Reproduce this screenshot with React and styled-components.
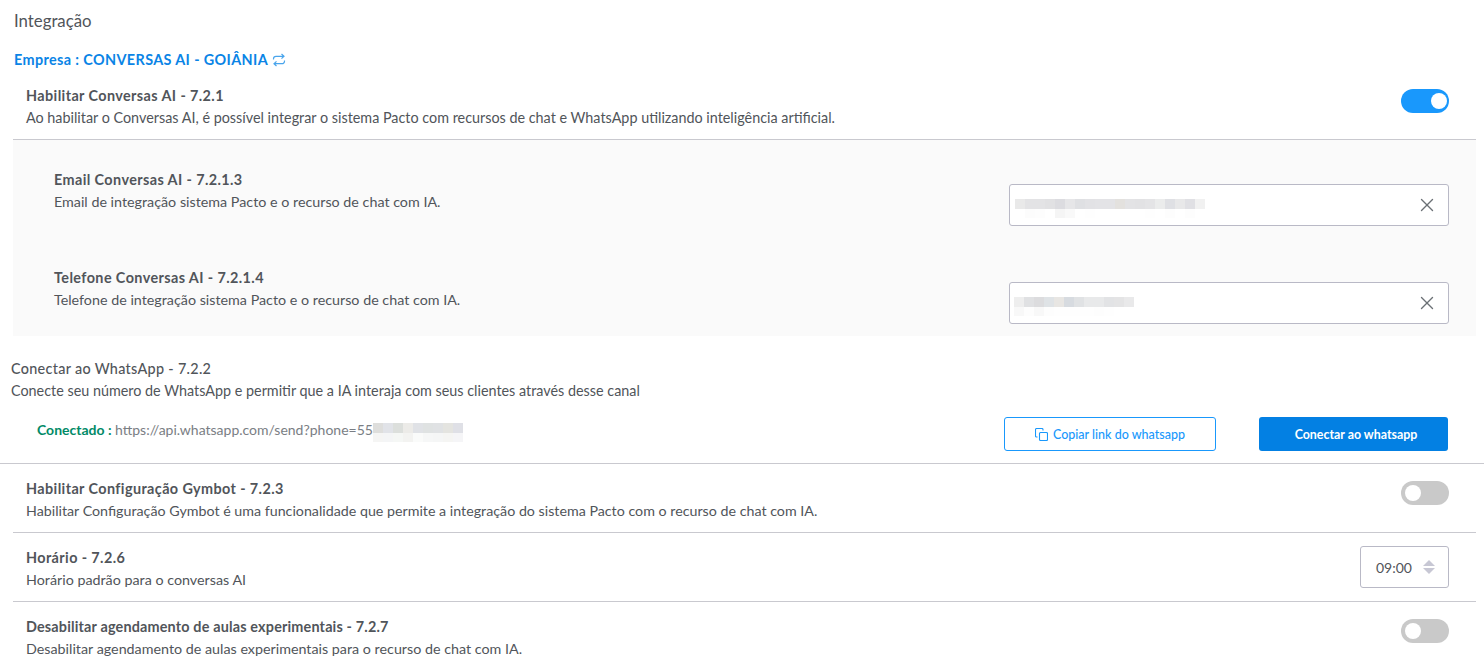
import React from "react"
import styled, { createGlobalStyle } from "styled-components"
import { X } from "lucide-react"

const GlobalStyle = createGlobalStyle`
  html, body {
    margin: 0;
    padding: 0;
    background: #fff;
    font-family: "Lato", "Liberation Sans", sans-serif;
    color: #51555a;
  }
`

const Page = styled.div`
  width: 1484px;
  height: 666px;
  overflow: hidden;
`

const Heading = styled.div`
  height: 42px;
  padding: 12px 0 0 14px;
  box-sizing: border-box;
  font-size: 16.8px;
  line-height: 18px;
`

const Company = styled.div`
  display: flex;
  align-items: center;
  gap: 4px;
  height: 35px;
  padding-left: 14px;
  color: #0a84e6;
  font-size: 14.4px;
  font-weight: 700;
  letter-spacing: 0.38px;
`

const Row = styled.div`
  display: flex;
  justify-content: space-between;
  align-items: flex-start;
  height: ${(p) => p.$height}px;
  margin: 0 8px 0 13px;
  padding: ${(p) => p.$top}px 27px 0 13px;
  box-sizing: border-box;
  border-bottom: ${(p) => (p.$last ? "none" : "1px solid #c9c9cf")};
`

const Title = styled.div`
  font-size: 14.4px;
  line-height: 22px;
  font-weight: 700;
  letter-spacing: ${(p) => p.$spacing || 0.4}px;
`

const Desc = styled.div`
  font-size: ${(p) => p.$size || 14.3}px;
  line-height: 22px;
`

const Switch = styled.div`
  display: flex;
  justify-content: ${(p) => (p.$on ? "flex-end" : "flex-start")};
  align-items: center;
  width: 48px;
  height: 24px;
  padding: ${(p) => (p.$on ? "0 2px" : "0 4px")};
  box-sizing: border-box;
  border-radius: 12px;
  background: ${(p) => (p.$on ? "#1998fc" : "#c9c9c9")};
  margin-top: ${(p) => (p.$on ? 4 : 3)}px;
  &::after {
    content: "";
    width: 16px;
    height: 16px;
    border-radius: 50%;
    background: #fff;
  }
`

const Panel = styled.div`
  margin: 0 8px 0 13px;
  height: 196px;
  background: #fafafa;
`

const PanelRow = styled.div`
  display: flex;
  justify-content: space-between;
  align-items: flex-start;
  height: 98px;
  padding: 29px 27px 0 41px;
  box-sizing: border-box;
`

const Field = styled.div`
  display: flex;
  align-items: center;
  justify-content: space-between;
  width: 440px;
  height: 42px;
  margin-top: 15px;
  padding: 0 10px 0 ${(p) => p.$left}px;
  box-sizing: border-box;
  background: #fff;
  border: 1px solid #b9b9c6;
  border-radius: 3px;
  color: #6b7075;
`

const Pixels = styled.svg`
  display: block;
  flex: none;
  margin-top: ${(p) => p.$top}px;
`

const Connect = styled.div`
  height: 128px;
  padding: 22px 0 0 11px;
  box-sizing: border-box;
  border-bottom: 1px solid #c9c9cf;
`

const ConnectTitle = styled.div`
  font-size: 14.4px;
  line-height: 22px;
  font-weight: 500;
  letter-spacing: 0.3px;
`

const ConnectRow = styled.div`
  display: flex;
  align-items: center;
  margin-top: 15px;
  height: 34px;
`

const Status = styled.div`
  display: flex;
  align-items: center;
  width: 993px;
  height: 34px;
  padding: 0 0 10px 26px;
  box-sizing: border-box;
  font-size: 14px;
  color: #7a7e84;
`

const Connected = styled.span`
  color: #028a67;
  font-weight: 700;
  white-space: pre;
`

const OutlineButton = styled.div`
  display: flex;
  align-items: center;
  justify-content: center;
  gap: 5px;
  width: 212px;
  height: 34px;
  box-sizing: border-box;
  border: 1px solid #1998fc;
  border-radius: 3px;
  color: #1998fc;
  font-size: 12.5px;
  font-weight: 500;
`

const SolidButton = styled.div`
  display: flex;
  align-items: center;
  justify-content: center;
  width: 189px;
  height: 34px;
  margin-left: 43px;
  padding-left: 5px;
  box-sizing: border-box;
  border-radius: 3px;
  background: #0380e3;
  color: #fff;
  font-size: 12.4px;
  font-weight: 700;
`

const TimeBox = styled.div`
  display: flex;
  align-items: center;
  gap: 11px;
  width: 89px;
  height: 42px;
  margin-top: -1px;
  padding-left: 15px;
  box-sizing: border-box;
  border: 1px solid #b9b9c6;
  border-radius: 3px;
  font-size: 14px;
`

const emailCells = [
  "#e9e9e9 #e3e3e5 #e3e3e5 #e1e1e3 #dcdce0 #e6e6e8 #dfe0e3 #e2e2e5 #e3e3e6 #e3e3e6 #e3e1de #e3e3e5 #e2e2e4 #e4e4e6 #ebecec #dfe0e4 #e8e8e9 #e0e0e4 #f1f1f1",
  "#fff #fcfcfc #fdfdfd #fff #f5f5f5 #f9f9f9 #fff #fefefe #fff #fff #fff #fff #fff #fefefe #fff #fdfdfd #fff #fdfdfd #fff",
]
const phoneCells = [
  "#eeeeee #e0e1e3 #dcdcde #dfe3e6 #e8e6e3 #d7dbe0 #e0e2e4 #e8e9ea #e8e9ea #e2e3e5 #e4e4e5 #e9e9ea",
  "#f8f8f8 #fdfdfd #f8f8f8 #fdfdfd #fefefe #fefefe #fefefe #fefefe #fdfdfd #fefefe #fff #fff",
]
const linkCells = [
  "#dededc #e1e3e8 #dcdfdc #ecebe8 #e0e2e6 #dfe2e2 #e0e2e4 #e4e4e0 #dfe0e6",
  "#f5f5f4 #f4f5f6 #f5f7f5 #f3f3f1 #fafbfa #f6f7f7 #f5f6f6 #f5f5f3 #f5f5f7",
]

const Blur = ({ rows, top: offset }) => {
  const top = rows[0].split(" ")
  const bottom = rows[1].split(" ")
  return (
    <Pixels $top={offset} width={top.length * 10} height={19} shapeRendering="crispEdges">
      {top.map((c, i) => <rect key={i} x={i * 10} y={0} width={10} height={10} fill={c} />)}
      {bottom.map((c, i) => <rect key={i} x={i * 10} y={10} width={10} height={9} fill={c} />)}
    </Pixels>
  )
}

const SwapIcon = () => (
  <svg width="14" height="14" viewBox="0 0 14 14" fill="none" stroke="#4aa5ec" strokeWidth="1.2">
    <path d="M9.5 1l2.5 2.3-2.5 2.3M12 3.3H4a2.5 2.5 0 0 0-2.5 2.5v.7" />
    <path d="M4.500 13L2 10.700l2.500-2.300M2 10.700h8a2.500 2.500 0 0 0 2.500-2.500v-.7" />
  </svg>
)

const CopyIcon = () => (
  <svg width="13" height="13" viewBox="0 0 13 13" fill="none" stroke="#1998fc" strokeWidth="1.100">
    <path d="M2.500 9H1.500a1 1 0 0 1-1-1V1.500a1 1 0 0 1 1-1H7a1 1 0 0 1 1 1v1" />
    <rect x="4.500" y="4.500" width="8" height="8" rx="1" />
  </svg>
)

const SpinIcon = () => (
  <svg width="12" height="14" viewBox="0 0 12 14" fill="#c7c7d4">
    <path d="M6 0l6 6H0z" />
    <path d="M6 14l6-6H0z" />
  </svg>
)

const App = () => (
  <Page>
    <GlobalStyle />
    <Heading>Integração</Heading>
    <Company>
      Empresa : CONVERSAS AI - GOIÂNIA <SwapIcon />
    </Company>
    <Row $height={63} $top={8}>
      <div>
        <Title>Habilitar Conversas AI - 7.2.1</Title>
        <Desc $size={14.37}>Ao habilitar o Conversas AI, é possível integrar o sistema Pacto com recursos de chat e WhatsApp utilizando inteligência artificial.</Desc>
      </div>
      <Switch $on />
    </Row>
    <Panel>
      <PanelRow>
        <div>
          <Title>Email Conversas AI - 7.2.1.3</Title>
          <Desc>Email de integração sistema Pacto e o recurso de chat com IA.</Desc>
        </div>
        <Field $left={5}>
          <Blur rows={emailCells} top={7} />
          <X size={22} strokeWidth={1.5} />
        </Field>
      </PanelRow>
      <PanelRow>
        <div>
          <Title>Telefone Conversas AI - 7.2.1.4</Title>
          <Desc>Telefone de integração sistema Pacto e o recurso de chat com IA.</Desc>
        </div>
        <Field $left={4}>
          <Blur rows={phoneCells} top={7} />
          <X size={22} strokeWidth={1.5} />
        </Field>
      </PanelRow>
    </Panel>
    <Connect>
      <ConnectTitle>Conectar ao WhatsApp - 7.2.2</ConnectTitle>
      <Desc $size={14.37}>Conecte seu número de WhatsApp e permitir que a IA interaja com seus clientes através desse canal</Desc>
      <ConnectRow>
        <Status>
          <Connected>Conectado : </Connected>
          https://api.whatsapp.com/send?phone=55
          <Blur rows={linkCells} top={7} />
        </Status>
        <OutlineButton><CopyIcon />Copiar link do whatsapp</OutlineButton>
        <SolidButton>Conectar ao whatsapp</SolidButton>
      </ConnectRow>
    </Connect>
    <Row $height={69} $top={14}>
      <div>
        <Title>Habilitar Configuração Gymbot - 7.2.3</Title>
        <Desc $size={14.25}>Habilitar Configuração Gymbot é uma funcionalidade que permite a integração do sistema Pacto com o recurso de chat com IA.</Desc>
      </div>
      <Switch />
    </Row>
    <Row $height={69} $top={14}>
      <div>
        <Title>Horário - 7.2.6</Title>
        <Desc>Horário padrão para o conversas AI</Desc>
      </div>
      <TimeBox>09:00<SpinIcon /></TimeBox>
    </Row>
    <Row $height={64} $top={14} $last>
      <div>
        <Title $spacing={0.17}>Desabilitar agendamento de aulas experimentais - 7.2.7</Title>
        <Desc>Desabilitar agendamento de aulas experimentais para o recurso de chat com IA.</Desc>
      </div>
      <Switch />
    </Row>
  </Page>
)

export default App
